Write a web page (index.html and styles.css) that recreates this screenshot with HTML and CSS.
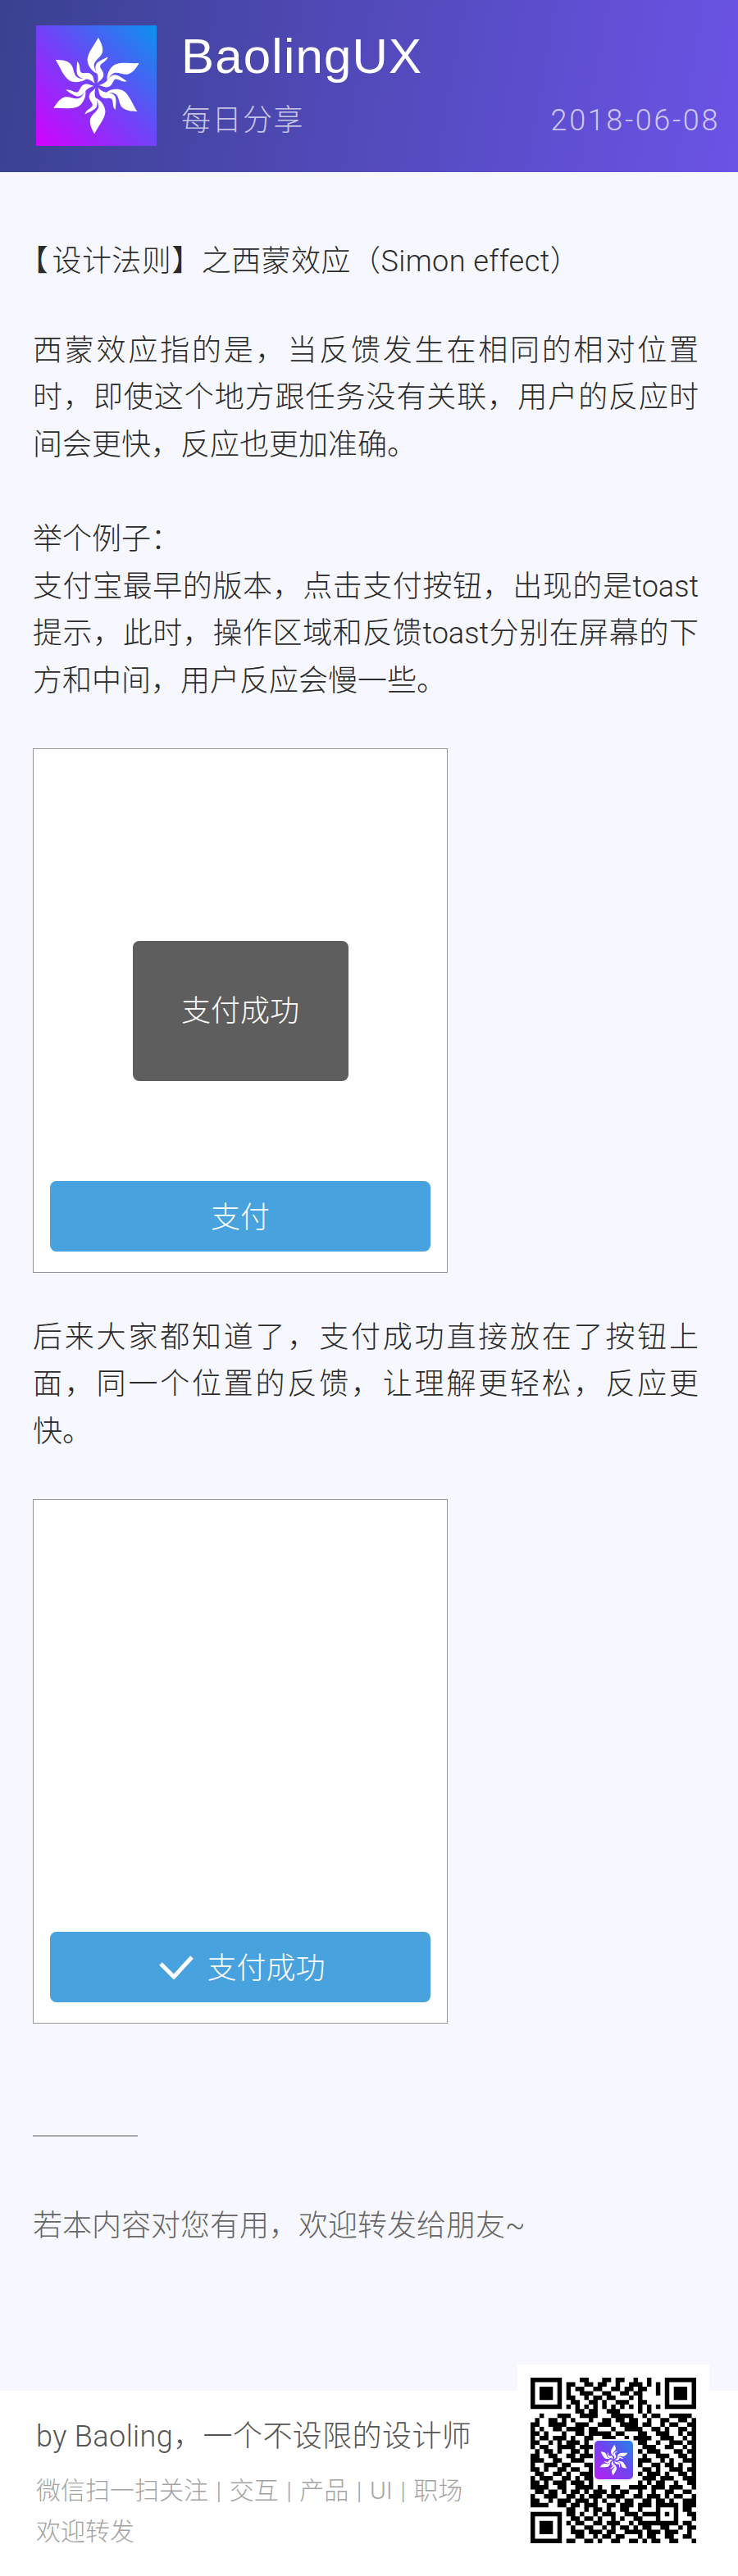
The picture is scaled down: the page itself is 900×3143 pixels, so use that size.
FILE: index.html
```html
<!DOCTYPE html>
<html lang="zh">
<head>
<meta charset="utf-8">
<title>BaolingUX</title>
<link rel="stylesheet" href="styles.css">
</head>
<body>
<svg class="defs" width="0" height="0" aria-hidden="true">
  <symbol id="flower" viewBox="-221 -221 442 442">
    <g id="petal">
      <path d="M7-177C18-158 26-140 22-122C17-105-2-97-8-80C-10-68-4-58 4-44C-14-50-32-72-33-95C-32-122-6-150 7-177Z"/>
      <path d="M42-105C38-88 20-85 14-73C12-62 30-52 26-36C23-22 10-18 3-8C8-25 6-38 2-46C-3-55-6-70 0-80C8-90 25-97 42-105Z"/>
    </g>
    <use href="#petal" transform="rotate(60)"/>
    <use href="#petal" transform="rotate(120)"/>
    <use href="#petal" transform="rotate(180)"/>
    <use href="#petal" transform="rotate(240)"/>
    <use href="#petal" transform="rotate(300)"/>
  </symbol>
</svg>

<header class="masthead">
  <div class="logo"><svg class="flower" viewBox="0 0 100 100"><use href="#flower"/></svg></div>
  <div class="brand">
    <h1 class="brand-name">BaolingUX</h1>
    <div class="brand-sub">
      <span class="brand-tag">每日分享</span>
      <span class="brand-date">2018-06-08</span>
    </div>
  </div>
</header>

<main class="article">
  <p class="para lead"><span class="bracket">【</span>设计法则】之西蒙效应（Simon effect）</p>
  <p class="para para-first">西蒙效应指的是，当反馈发生在相同的相对位置时，即使这个地方跟任务没有关联，用户的反应时间会更快，反应也更加准确。</p>
  <p class="para para-next">举个例子：<br>支付宝最早的版本，点击支付按钮，出现的是toast提示，此时，操作区域和反馈toast分别在屏幕的下方和中间，用户反应会慢一些。</p>
  <div class="phone phone-first">
    <div class="toast">支付成功</div>
    <div class="pay">支付</div>
  </div>
  <p class="para para-after">后来大家都知道了，支付成功直接放在了按钮上面，同一个位置的反馈，让理解更轻松，反应更快。</p>
  <div class="phone phone-second">
    <div class="pay">
      <svg class="check" viewBox="0 0 42 30"><path d="M2 11L18 27L40 3"/></svg>
      <span>支付成功</span>
    </div>
  </div>
  <hr class="rule">
  <p class="para share">若本内容对您有用，欢迎转发给朋友~</p>
</main>

<footer class="footer">
  <div class="credit">
    <p class="credit-name">by Baoling，一个不设限的设计师</p>
    <p class="credit-note">微信扫一扫关注 | 交互 | 产品 | UI | 职场<br>欢迎转发</p>
  </div>
  <div class="qr-card">
    <div class="qr">
      <svg class="qr-code" viewBox="0 0 37 37">
        <path d="M0 .5h7M11 .5h2M16 .5h2M19 .5h2M23 .5h1M26 .5h1M30 .5h7
M0 1.5h1M6 1.5h1M8 1.5h2M12 1.5h2M15 1.5h2M19 1.5h1M22 1.5h3M26 1.5h1M28 1.5h1M30 1.5h1M36 1.5h1
M0 2.5h1M2 2.5h3M6 2.5h1M8 2.5h1M10 2.5h2M14 2.5h2M18 2.5h2M21 2.5h2M24 2.5h2M28 2.5h1M30 2.5h1M32 2.5h3M36 2.5h1
M0 3.5h1M2 3.5h3M6 3.5h1M8 3.5h1M11 3.5h3M16 3.5h2M20 3.5h2M23 3.5h2M28 3.5h1M30 3.5h1M32 3.5h3M36 3.5h1
M0 4.5h1M2 4.5h3M6 4.5h1M8 4.5h2M12 4.5h1M14 4.5h2M17 4.5h2M22 4.5h1M24 4.5h1M30 4.5h1M32 4.5h3M36 4.5h1
M0 5.5h1M6 5.5h1M9 5.5h2M13 5.5h2M16 5.5h1M19 5.5h3M24 5.5h2M30 5.5h1M36 5.5h1
M0 6.5h7M8 6.5h1M10 6.5h1M12 6.5h1M14 6.5h1M16 6.5h1M18 6.5h1M20 6.5h1M22 6.5h1M24 6.5h1M26 6.5h1M28 6.5h1M30 6.5h7
M10 7.5h2M13 7.5h2M17 7.5h3M24 7.5h1M26 7.5h1
M2 8.5h1M6 8.5h3M11 8.5h4M18 8.5h5M25 8.5h1M27 8.5h2M31 8.5h5
M1 9.5h1M4 9.5h2M7 9.5h1M9 9.5h1M13 9.5h1M16 9.5h2M19 9.5h2M22 9.5h2M26 9.5h1M29 9.5h2M33 9.5h2M36 9.5h1
M0 10.5h2M4 10.5h4M10 10.5h3M15 10.5h3M20 10.5h4M25 10.5h2M29 10.5h1M31 10.5h2M35 10.5h2
M0 11.5h1M2 11.5h1M5 11.5h2M8 11.5h4M13 11.5h2M18 11.5h1M21 11.5h4M27 11.5h2M30 11.5h1M33 11.5h2M36 11.5h1
M0 12.5h2M3 12.5h1M7 12.5h1M10 12.5h2M13 12.5h5M19 12.5h2M24 12.5h2M28 12.5h3M33 12.5h1M35 12.5h2
M0 13.5h1M2 13.5h2M5 13.5h3M9 13.5h1M12 13.5h2M16 13.5h3M21 13.5h1M23 13.5h4M29 13.5h3M34 13.5h1M36 13.5h1
M0 14.5h2M4 14.5h1M6 14.5h1M8 14.5h3M12 14.5h1M24 14.5h2M28 14.5h1M31 14.5h3M35 14.5h2
M0 15.5h1M2 15.5h2M6 15.5h4M11 15.5h3M25 15.5h3M30 15.5h2M34 15.5h1M36 15.5h1
M1 16.5h1M3 16.5h2M6 16.5h1M9 16.5h2M12 16.5h1M24 16.5h1M26 16.5h3M32 16.5h2M35 16.5h2
M0 17.5h2M4 17.5h2M8 17.5h2M11 17.5h3M25 17.5h1M28 17.5h3M33 17.5h2M36 17.5h1
M0 18.5h3M5 18.5h2M9 18.5h3M24 18.5h3M29 18.5h1M31 18.5h1M34 18.5h3
M0 19.5h1M3 19.5h3M7 19.5h2M12 19.5h2M24 19.5h1M27 19.5h2M30 19.5h2M33 19.5h1M36 19.5h1
M0 20.5h2M3 20.5h1M6 20.5h2M9 20.5h2M13 20.5h1M25 20.5h2M28 20.5h1M31 20.5h3M35 20.5h2
M1 21.5h2M5 21.5h2M8 21.5h1M11 21.5h3M24 21.5h1M26 21.5h3M30 21.5h1M33 21.5h2M36 21.5h1
M0 22.5h1M2 22.5h3M7 22.5h2M10 22.5h1M12 22.5h2M25 22.5h3M29 22.5h3M34 22.5h3
M0 23.5h2M3 23.5h1M5 23.5h3M9 23.5h3M13 23.5h1M24 23.5h1M26 23.5h1M28 23.5h2M32 23.5h1M35 23.5h2
M0 24.5h4M6 24.5h2M10 24.5h4M15 24.5h1M18 24.5h2M22 24.5h4M27 24.5h3M31 24.5h3M36 24.5h1
M1 25.5h2M4 25.5h2M7 25.5h1M9 25.5h2M12 25.5h1M14 25.5h3M18 25.5h1M20 25.5h2M24 25.5h1M27 25.5h1M30 25.5h2M34 25.5h2
M0 26.5h1M3 26.5h3M8 26.5h2M11 26.5h1M13 26.5h3M17 26.5h4M23 26.5h2M26 26.5h3M30 26.5h1M32 26.5h2M36 26.5h1
M0 27.5h2M4 27.5h1M6 27.5h3M10 27.5h3M14 27.5h1M16 27.5h1M19 27.5h1M21 27.5h2M25 27.5h2M28 27.5h2M31 27.5h1M34 27.5h3
M0 28.5h4M6 28.5h2M9 28.5h2M12 28.5h3M17 28.5h2M20 28.5h3M24 28.5h3M28 28.5h5M34 28.5h3
M8 29.5h2M12 29.5h1M14 29.5h2M17 29.5h1M20 29.5h2M24 29.5h1M28 29.5h1M32 29.5h1M34 29.5h2
M0 30.5h7M8 30.5h2M11 30.5h1M14 30.5h1M16 30.5h3M21 30.5h3M25 30.5h4M30 30.5h1M32 30.5h1M35 30.5h2
M0 31.5h1M6 31.5h1M9 31.5h2M12 31.5h2M15 31.5h1M18 31.5h1M20 31.5h1M23 31.5h2M28 31.5h1M32 31.5h1M36 31.5h1
M0 32.5h1M2 32.5h3M6 32.5h1M8 32.5h1M10 32.5h2M14 32.5h2M17 32.5h3M22 32.5h1M24 32.5h9M34 32.5h2
M0 33.5h1M2 33.5h3M6 33.5h1M9 33.5h1M12 33.5h2M16 33.5h1M18 33.5h1M20 33.5h2M23 33.5h1M25 33.5h2M29 33.5h2M33 33.5h1M35 33.5h2
M0 34.5h1M2 34.5h3M6 34.5h1M9 34.5h3M13 34.5h3M17 34.5h2M21 34.5h4M26 34.5h3M30 34.5h3M35 34.5h1
M0 35.5h1M6 35.5h1M10 35.5h2M14 35.5h1M16 35.5h2M19 35.5h2M24 35.5h1M26 35.5h2M30 35.5h2M34 35.5h2
M0 36.5h7M8 36.5h2M12 36.5h2M15 36.5h1M18 36.5h2M22 36.5h2M25 36.5h1M27 36.5h2M31 36.5h2M36 36.5h1"/>
      </svg>
      <div class="qr-logo"><svg class="flower" viewBox="0 0 100 100"><use href="#flower"/></svg></div>
    </div>
  </div>
</footer>
</body>
</html>
```
FILE: styles.css
```css
* { box-sizing: border-box; }

html, body {
  margin: 0;
  padding: 0;
}

body {
  width: 900px;
  background: #f7f8ff;
  color: #2b2b2b;
  font-family: Roboto, "Noto Sans CJK SC", sans-serif;
  font-weight: 300;
}

.defs { position: absolute; }

.masthead {
  display: flex;
  height: 210px;
  padding: 31px 22px 0 44px;
  background: linear-gradient(100deg, #3a4190 0%, #6b53e6 100%);
}

.logo {
  flex: none;
  width: 147px;
  height: 147px;
  background: linear-gradient(45deg, #d400ff 0%, #6d45f7 52%, #0a93ee 100%);
}

.flower {
  display: block;
  width: 100%;
  height: 100%;
  fill: #fff;
}

.brand {
  flex: 1;
  margin-left: 30px;
}

.brand-name {
  margin: 0;
  padding-top: 2px;
  color: #fff;
  font-family: "Liberation Sans", sans-serif;
  font-size: 60px;
  font-weight: 400;
  line-height: 72px;
  letter-spacing: 1.2px;
}

.brand-sub {
  display: flex;
  justify-content: space-between;
  align-items: center;
  margin-top: 17px;
  color: rgba(255, 255, 255, 0.7);
}

.brand-tag {
  font-size: 36px;
  line-height: 50px;
  letter-spacing: 1.5px;
}

.brand-date {
  font-size: 36px;
  line-height: 50px;
  letter-spacing: 2.6px;
}

.article { padding: 81px 48px 0 40px; }

.para {
  margin: 0;
  font-size: 36px;
  line-height: 57.6px;
  text-align: justify;
}

.lead { letter-spacing: 0.45px; }

.bracket {
  margin-right: 5px;
  font-feature-settings: "palt";
}

.para-first { margin-top: 51px; }

.para-next { margin-top: 57.6px; }

.para-after { margin-top: 50.5px; }

.phone {
  display: flex;
  flex-direction: column;
  width: 506px;
  height: 640px;
  padding: 0 20px 25px;
  border: 1px solid #979797;
  background: #fff;
}

.phone-first { margin-top: 53px; }

.phone-second { margin-top: 52.5px; }

.toast {
  display: flex;
  align-items: center;
  justify-content: center;
  width: 263px;
  height: 171px;
  margin: 234px auto 0;
  padding-bottom: 7px;
  border-radius: 8px;
  background: #5e5e5e;
  color: #fff;
  font-size: 36px;
}

.pay {
  display: flex;
  align-items: center;
  justify-content: center;
  gap: 16px;
  height: 86px;
  margin-top: auto;
  padding-bottom: 5px;
  border-radius: 8px;
  background: #47a2de;
  color: #fff;
  font-size: 36px;
}

.check {
  width: 42px;
  height: 30px;
  margin: 5px 0 0 5px;
  fill: none;
  stroke: #fff;
  stroke-width: 5;
}

.rule {
  width: 128px;
  height: 2px;
  margin: 136px 0 0;
  border: 0;
  background: #aaa;
}

.share {
  margin-top: 81px;
  color: #666;
}

.footer {
  display: flex;
  justify-content: space-between;
  height: 226px;
  margin-top: 171.4px;
  padding: 0 35px 0 44px;
  background: #fff;
}

.credit { padding-top: 31px; }

.credit-name {
  margin: 0;
  color: #555;
  font-size: 36px;
  line-height: 50px;
  letter-spacing: 0.4px;
}

.credit-note {
  margin: 16px 0 0;
  color: #a3a3a3;
  font-size: 30px;
  line-height: 50px;
  word-spacing: 2.2px;
}

.qr-card {
  flex: none;
  width: 234px;
  height: 258px;
  margin-top: -32px;
  padding: 16px;
  background: #fff;
}

.qr {
  position: relative;
  width: 202px;
  height: 202px;
}

.qr-code {
  display: block;
  width: 100%;
  height: 100%;
  fill: none;
  stroke: #000;
  stroke-width: 1;
}

.qr-logo {
  position: absolute;
  top: 75px;
  left: 76px;
  width: 51px;
  height: 51px;
  border: 2px solid #f2f2fa;
  border-radius: 7px;
  background: linear-gradient(45deg, #b81ff0 0%, #6d45f0 55%, #1f86e8 100%);
}
```
